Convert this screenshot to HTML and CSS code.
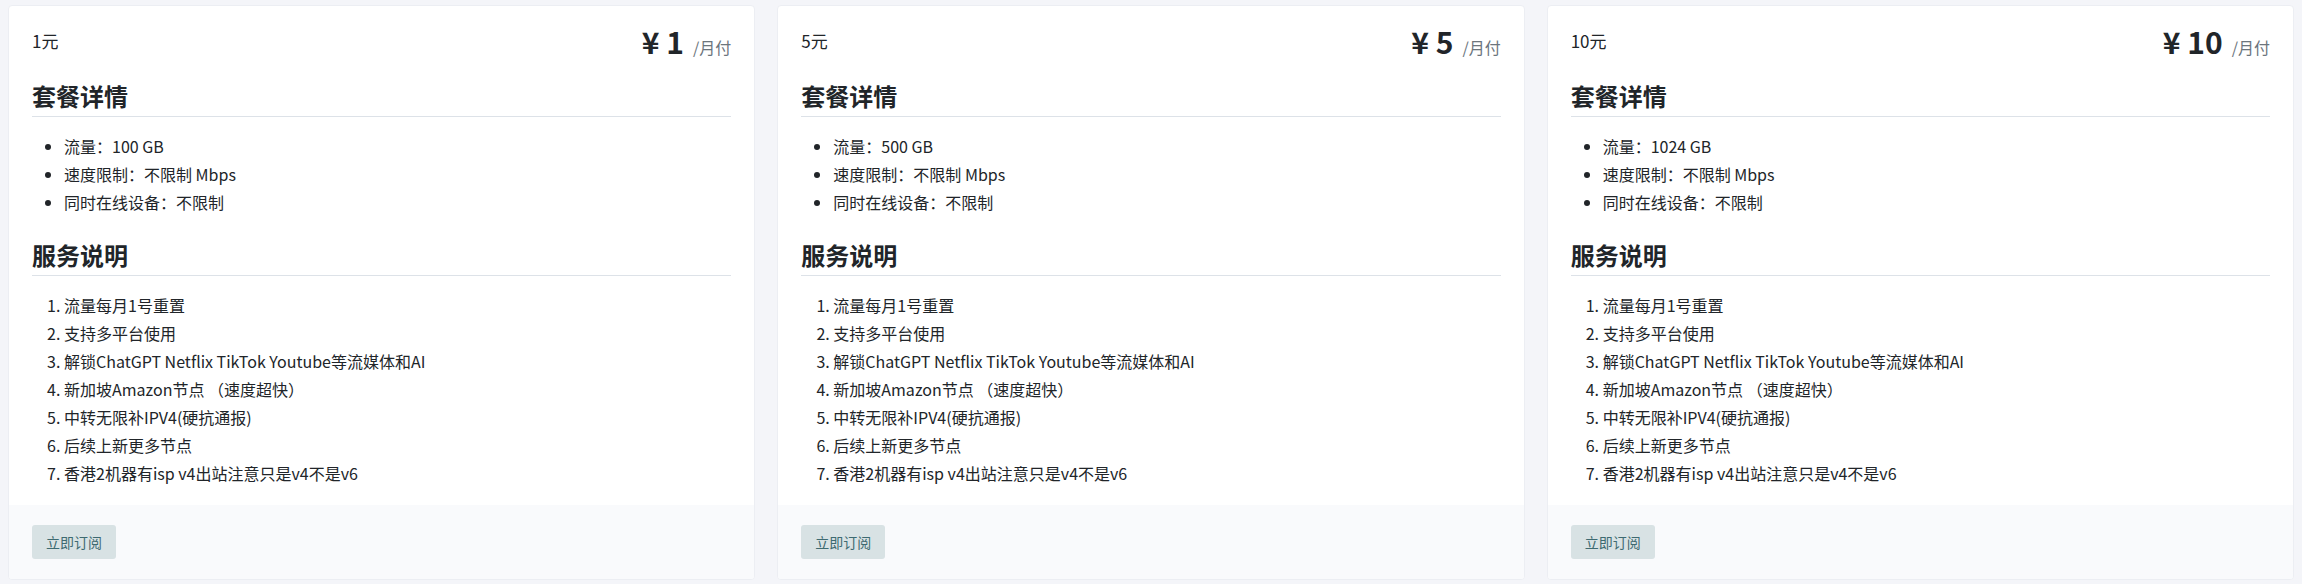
FILE: index.html
```html
<!DOCTYPE html>
<html lang="zh-CN">
<head>
<meta charset="utf-8">
<title>套餐</title>
<link rel="stylesheet" href="styles.css">
</head>
<body>
<div class="plans">
  <div class="card">
    <div class="card-body">
      <div class="card-head">
        <span class="plan-name">1元</span>
        <span class="price"><span class="amount">¥ 1</span><span class="per">/月付</span></span>
      </div>
      <h3 class="section-title">套餐详情</h3>
      <ul class="spec-list">
        <li>流量：100 GB</li>
        <li>速度限制：不限制 Mbps</li>
        <li>同时在线设备：不限制</li>
      </ul>
      <h3 class="section-title">服务说明</h3>
      <ol class="note-list">
        <li>流量每月1号重置</li>
        <li>支持多平台使用</li>
        <li>解锁ChatGPT Netflix TikTok Youtube等流媒体和AI</li>
        <li>新加坡Amazon节点 （速度超快）</li>
        <li>中转无限补IPV4(硬抗通报)</li>
        <li>后续上新更多节点</li>
        <li>香港2机器有isp v4出站注意只是v4不是v6</li>
      </ol>
    </div>
    <div class="card-foot"><button class="btn-sub">立即订阅</button></div>
  </div>
  <div class="card">
    <div class="card-body">
      <div class="card-head">
        <span class="plan-name">5元</span>
        <span class="price"><span class="amount">¥ 5</span><span class="per">/月付</span></span>
      </div>
      <h3 class="section-title">套餐详情</h3>
      <ul class="spec-list">
        <li>流量：500 GB</li>
        <li>速度限制：不限制 Mbps</li>
        <li>同时在线设备：不限制</li>
      </ul>
      <h3 class="section-title">服务说明</h3>
      <ol class="note-list">
        <li>流量每月1号重置</li>
        <li>支持多平台使用</li>
        <li>解锁ChatGPT Netflix TikTok Youtube等流媒体和AI</li>
        <li>新加坡Amazon节点 （速度超快）</li>
        <li>中转无限补IPV4(硬抗通报)</li>
        <li>后续上新更多节点</li>
        <li>香港2机器有isp v4出站注意只是v4不是v6</li>
      </ol>
    </div>
    <div class="card-foot"><button class="btn-sub">立即订阅</button></div>
  </div>
  <div class="card">
    <div class="card-body">
      <div class="card-head">
        <span class="plan-name">10元</span>
        <span class="price"><span class="amount">¥ 10</span><span class="per">/月付</span></span>
      </div>
      <h3 class="section-title">套餐详情</h3>
      <ul class="spec-list">
        <li>流量：1024 GB</li>
        <li>速度限制：不限制 Mbps</li>
        <li>同时在线设备：不限制</li>
      </ul>
      <h3 class="section-title">服务说明</h3>
      <ol class="note-list">
        <li>流量每月1号重置</li>
        <li>支持多平台使用</li>
        <li>解锁ChatGPT Netflix TikTok Youtube等流媒体和AI</li>
        <li>新加坡Amazon节点 （速度超快）</li>
        <li>中转无限补IPV4(硬抗通报)</li>
        <li>后续上新更多节点</li>
        <li>香港2机器有isp v4出站注意只是v4不是v6</li>
      </ol>
    </div>
    <div class="card-foot"><button class="btn-sub">立即订阅</button></div>
  </div>
</div>
</body>
</html>
```

FILE: styles.css
```css
html, body {
  margin: 0;
  padding: 0;
}
body {
  background: #f4f5f9;
  font-family: "Noto Sans CJK SC", "Noto Sans", sans-serif;
  color: #212529;
  font-size: 16px;
}
.plans {
  display: grid;
  grid-template-columns: repeat(3, 1fr);
  gap: 22px;
  padding: 5px 8px;
}
.card {
  background: #fff;
  border: 1px solid #eceef3;
  border-radius: 4px;
  display: flex;
  flex-direction: column;
  overflow: hidden;
}
.card-body {
  padding: 17px 23px 18px;
  flex: 1;
}
.card-head {
  display: flex;
  justify-content: space-between;
  align-items: center;
  height: 36px;
}
.plan-name {
  font-size: 17px;
  line-height: 24px;
}
.price {
  display: flex;
  align-items: baseline;
}
.amount {
  font-size: 30px;
  font-weight: 700;
  line-height: 36px;
}
.per {
  font-size: 16px;
  color: #6c757d;
  margin-left: 9px;
}
.section-title {
  font-size: 24px;
  font-weight: 700;
  line-height: 29px;
  margin: 22px 0 0;
  padding-bottom: 6px;
  border-bottom: 1px solid #dde2e8;
}
.spec-list + .section-title {
  margin-top: 24px;
}
.spec-list, .note-list {
  margin: 15px 0 0;
  padding-left: 32px;
  font-size: 16px;
  line-height: 28px;
}
.card-foot {
  background: #f9fafc;
  padding: 20px 23px;
}
.btn-sub {
  font-family: inherit;
  font-size: 14px;
  line-height: 22px;
  padding: 6px 14px;
  border: 0;
  border-radius: 3px;
  background: #d8e2e4;
  color: #3e6a71;
}
```
